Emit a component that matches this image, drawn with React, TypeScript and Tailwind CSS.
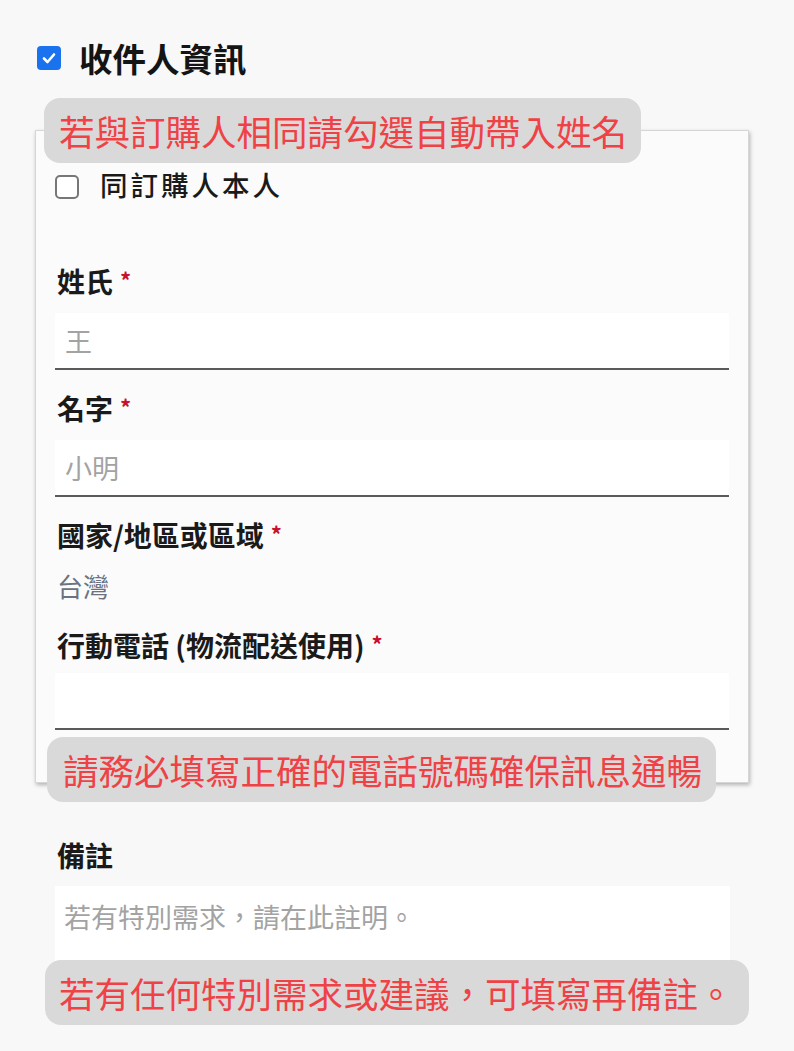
import React from "react";

function Asterisk() {
  return <span className="ml-[7px] text-[22px] font-bold text-[#c8102e] align-top relative top-[-2px]">*</span>;
}

function Label({ text, className = "", req = true }: { text: string; className?: string; req?: boolean }) {
  return (
    <div className={`h-[32px] leading-[32px] text-[28px] font-bold text-[#1a1a1a] whitespace-nowrap pl-[2px] ${className}`}>
      {text}
      {req && <Asterisk />}
    </div>
  );
}

function Field({ placeholder, className = "" }: { placeholder?: string; className?: string }) {
  return (
    <div className={`h-[57px] bg-white border-b-2 border-[#5a5a5a] flex items-center pl-[10px] ${className}`}>
      {placeholder && <span className="text-[27px] leading-[32px] text-[#a3a3a3]">{placeholder}</span>}
    </div>
  );
}

function Callout({ text, className }: { text: string; className: string }) {
  return (
    <div
      className={`absolute h-[65px] rounded-[16px] bg-[#d9d9d9] flex items-center text-[35.5px] leading-[40px] text-[#ef4246] whitespace-nowrap ${className}`}
    >
      {text}
    </div>
  );
}

export default function App() {
  return (
    <div className="relative w-[794px] min-h-[1051px] bg-[#f8f8f8] font-['Noto_Sans_CJK_TC','Noto_Sans',sans-serif] overflow-hidden">
      {/* header */}
      <div className="pt-[46px] pl-[37px] flex items-center gap-[18px] h-[70px]">
        <div className="w-[24px] h-[24px] rounded-[4px] bg-[#1b72ee] flex items-center justify-center">
          <svg width="16" height="16" viewBox="0 0 16 16" fill="none">
            <path d="M3 8.5 L6.5 12 L13 4.5" stroke="white" strokeWidth="2.6" strokeLinecap="round" strokeLinejoin="round" />
          </svg>
        </div>
        <div className="h-[24px] leading-[24px] text-[33.5px] font-bold text-[#141414]">收件人資訊</div>
      </div>

      {/* card */}
      <div className="ml-[35px] mt-[60px] w-[714px] border border-[#d6d6d6] bg-[#fbfbfb] shadow-[1px_2px_4px_rgba(0,0,0,0.28)] px-[19px] pt-[44px] pb-[52px]">
        <div className="flex items-center gap-[21px] h-[24px]">
          <div className="w-[24px] h-[24px] rounded-[5px] border-2 border-[#777777] bg-white" />
          <div className="relative top-[-3px] text-[27.5px] leading-[24px] tracking-[3px] font-medium text-[#1a1a1a]">同訂購人本人</div>
        </div>

        <Label text="姓氏" className="mt-[66px]" />
        <Field placeholder="王" className="mt-[16px]" />

        <Label text="名字" className="mt-[22px]" />
        <Field placeholder="小明" className="mt-[16px]" />

        <Label text="國家/地區或區域" className="mt-[22px]" />
        <div className="mt-[19px] h-[32px] leading-[32px] text-[26px] text-[#6b7280] pl-[2px]">台灣</div>

        <Label text="行動電話 (物流配送使用)" className="mt-[27px]" />
        <Field className="mt-[12px]" />
      </div>

      {/* notes */}
      <div className="ml-[55px] w-[675px] mt-[56px]">
        <Label text="備註" req={false} />
        <div className="mt-[15px] h-[80px] bg-white pt-[15px] pl-[9px]">
          <span className="text-[27px] leading-[32px] text-[#a3a3a3]">若有特別需求，請在此註明。</span>
        </div>
      </div>

      {/* annotation callouts */}
      <Callout text="若與訂購人相同請勾選自動帶入姓名" className="left-[44px] top-[98px] w-[597px] pl-[15px]" />
      <Callout text="請務必填寫正確的電話號碼確保訊息通暢" className="left-[47px] top-[737px] w-[669px] pl-[16px] h-[64px]" />
      <Callout text="若有任何特別需求或建議，可填寫再備註。" className="left-[45px] top-[960px] w-[704px] pl-[14px]" />
    </div>
  );
}
